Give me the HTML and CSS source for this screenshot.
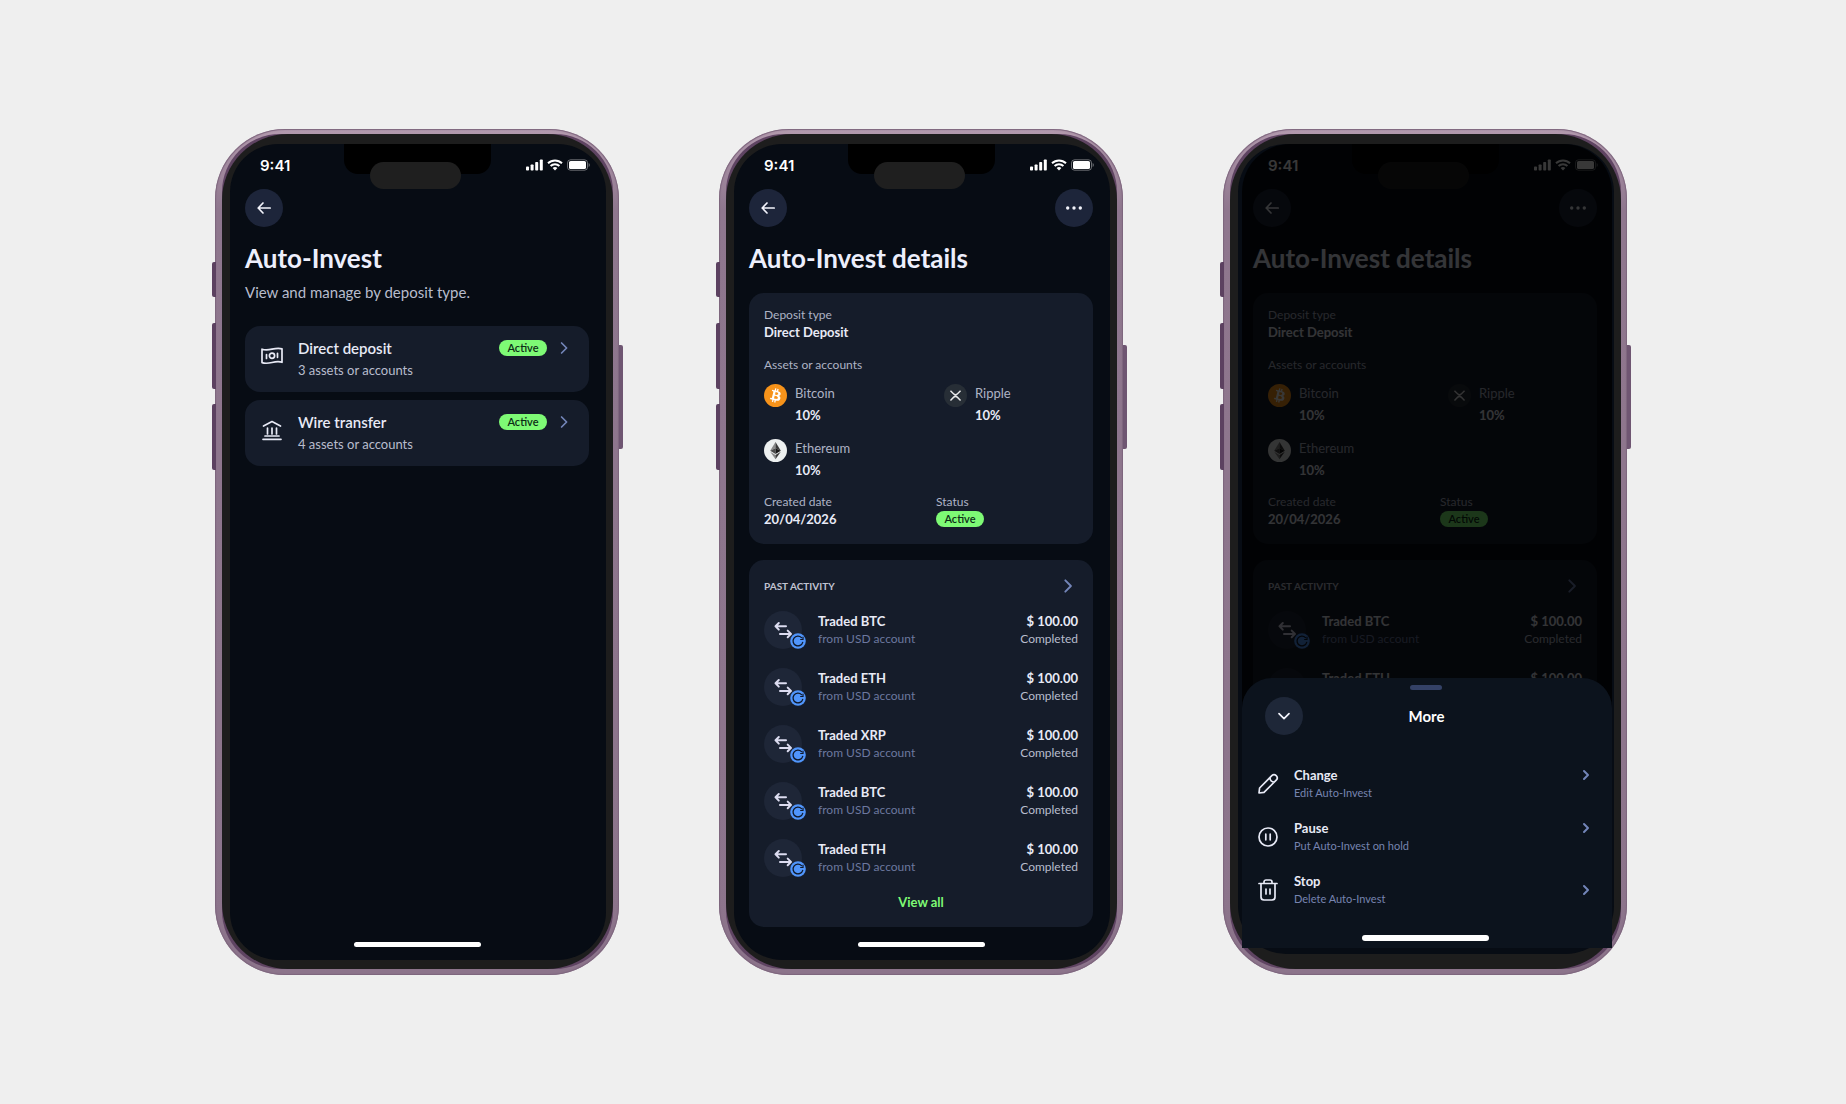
FILE: index.html
```
<!DOCTYPE html>
<html lang="en">
<head>
  <meta charset="UTF-8">
  <meta name="viewport" content="width=device-width, initial-scale=1">
  <title>Auto-Invest</title>
  <link rel="stylesheet" href="styles.css">
</head>
<body>

  <svg class="sprite" aria-hidden="true">
    <symbol id="signal" viewBox="0 0 17 12">
      <rect x="0" y="7.5" width="3" height="4" rx=".8"/>
      <rect x="4.6" y="5.5" width="3" height="6" rx=".8"/>
      <rect x="9.2" y="3" width="3" height="8.5" rx=".8"/>
      <rect x="13.8" y=".5" width="3" height="11" rx=".8"/>
    </symbol>
    <symbol id="wifi" viewBox="0 0 16 12">
      <path fill="none" stroke="currentColor" stroke-width="2" d="M1 4.3a10 10 0 0 1 14 0M3.6 7a6.2 6.2 0 0 1 8.8 0"/>
      <path d="M8 11.5 5.6 9.1a3.4 3.4 0 0 1 4.8 0z"/>
    </symbol>
    <symbol id="battery" viewBox="0 0 23 12">
      <rect x=".5" y=".8" width="20" height="10.4" rx="3" fill="none" stroke="currentColor" opacity=".4"/>
      <rect x="2" y="2" width="17" height="8" rx="1.6"/>
      <path d="M21.6 4v4a2.2 2.2 0 0 0 0-4z" opacity=".4"/>
    </symbol>
    <symbol id="back" viewBox="0 0 16 16">
      <path d="M14.2 8H2.2M7 3 2.2 8 7 13" class="line"/>
    </symbol>
    <symbol id="dots" viewBox="0 0 16 16">
      <circle cx="1.7" cy="8" r="1.7"/><circle cx="8" cy="8" r="1.7"/><circle cx="14.3" cy="8" r="1.7"/>
    </symbol>
    <symbol id="chevron" viewBox="0 0 16 16">
      <path d="M5.6 3 10.6 8l-5 5" class="line"/>
    </symbol>
    <symbol id="chevron-small" viewBox="0 0 16 16">
      <path d="M6 4l4 4-4 4" class="line bold"/>
    </symbol>
    <symbol id="chevron-down" viewBox="0 0 16 16">
      <path d="M3 5.6 8 10.6l5-5" class="line"/>
    </symbol>
    <symbol id="money" viewBox="0 0 22 22">
      <path d="M1 4.2c3.4 1.3 6.6.8 10 0s6.6-1.5 10-.3v13.4c-3.4-1.2-6.6-.6-10 .2s-6.6 1.3-10 .1z" class="line"/>
      <circle cx="11" cy="10.8" r="2.6" class="line"/>
      <path d="M5.5 9.500v4M16.5 8.300v4" class="line"/>
    </symbol>
    <symbol id="bank" viewBox="0 0 22 22">
      <path d="M2.5 7 11 2.500 19.500 7M6.500 9v6M11 9v6M15.500 9v6M4 17h14M2 20.300h18" class="line"/>
    </symbol>
    <symbol id="swap" viewBox="0 0 38 38">
      <path d="M22 15.300H11.500M14.800 12l-3.300 3.300 3.300 3.300M16 22.900h11M23.700 19.600l3.300 3.300-3.300 3.300" class="line bold"/>
    </symbol>
    <symbol id="repeat" viewBox="0 0 16 16">
      <circle cx="8" cy="8" r="7.8" fill="#5095fb"/>
      <path d="M11.500 4.600A4.900 4.900 0 1 0 12.700 9.300" fill="none" stroke="#0f1726" stroke-width="1.300" stroke-linecap="round"/>
      <path d="M10.200 6.500h2.800V3.700" fill="none" stroke="#0f1726" stroke-width="1.200"/>
    </symbol>
    <symbol id="btc" viewBox="0 0 32 32">
      <circle cx="16" cy="16" r="16" fill="#f7931a"/>
      <path fill="#fff" d="M23.189 14.020c.314-2.096-1.283-3.223-3.465-3.975l.708-2.840-1.728-.430-.690 2.765c-.454-.114-.920-.220-1.385-.326l.695-2.783L15.596 6l-.708 2.839c-.376-.086-.746-.170-1.104-.260l.002-.009-2.384-.595-.460 1.846s1.283.294 1.256.312c.700.175.826.638.805 1.006l-.806 3.235c.048.012.110.030.180.057l-.183-.045-1.130 4.532c-.086.212-.303.531-.793.410.018.025-1.256-.313-1.256-.313l-.858 1.978 2.250.561c.418.105.828.215 1.231.318l-.715 2.872 1.727.430.708-2.840c.472.127.930.245 1.378.357l-.706 2.828 1.728.430.715-2.866c2.948.558 5.164.333 6.097-2.333.752-2.146-.037-3.385-1.588-4.192 1.130-.260 1.980-1.003 2.207-2.538zm-3.950 5.538c-.533 2.147-4.148.986-5.320.695l.950-3.805c1.172.293 4.929.872 4.370 3.110zm.535-5.569c-.487 1.953-3.495.960-4.470.717l.860-3.450c.975.243 4.118.696 3.610 2.733z"/>
    </symbol>
    <symbol id="xrp" viewBox="0 0 32 32">
      <circle cx="16" cy="16" r="16" fill="#272e36"/>
      <path d="M9 9.500l4.200 4.200a4 4 0 0 0 5.600 0L23 9.500M9 22.800l4.200-4.200a4 4 0 0 1 5.600 0l4.200 4.200" fill="none" stroke="#e8e8ea" stroke-width="2"/>
    </symbol>
    <symbol id="eth" viewBox="0 0 32 32">
      <circle cx="16" cy="16" r="16" fill="#edf0f0"/>
      <path d="M16 4v8.900L8.600 16.300z" fill="#8a8a8a"/>
      <path d="M16 4v8.900l7.400 3.400z" fill="#3a3a3a"/>
      <path d="M16 12.900v7.800l-7.400-4.400z" fill="#4a4a4a"/>
      <path d="M16 12.900v7.800l7.400-4.400z" fill="#161616"/>
      <path d="M16 22.100V28L8.600 17.700z" fill="#8a8a8a"/>
      <path d="M16 22.100V28l7.400-10.300z" fill="#3a3a3a"/>
    </symbol>
    <symbol id="pencil" viewBox="0 0 22 22">
      <path d="M2 20l.6-5L14.800 2.700a2.900 2.900 0 0 1 4.400 4.400L7 19.400zM13 4.800c0 2.400 1.800 4.200 4.200 4.200" class="line"/>
    </symbol>
    <symbol id="pause" viewBox="0 0 22 22">
      <circle cx="11" cy="11" r="9" class="line"/>
      <path d="M8.800 8.200v5.600M13.200 8.200v5.600" class="line"/>
    </symbol>
    <symbol id="trash" viewBox="0 0 22 22">
      <path d="M2 4.500h18M7 4.500V3a2 2 0 0 1 2-2h4a2 2 0 0 1 2 2v1.500M4 4.500v13.500a3 3 0 0 0 3 3h8a3 3 0 0 0 3-3V4.500M9 10v5M13 10v5" class="line"/>
    </symbol>
  </svg>

  <main class="stage">

    <!-- Overview -->
    <section class="phone">
      <div class="side side-1"></div><div class="side side-2"></div><div class="side side-3"></div><div class="side side-power"></div>
      <div class="screen">
        <div class="notch"></div>
        <div class="island"></div>
        <div class="status-bar">
          <span class="time">9:41</span>
          <svg width="17" height="12"><use href="#signal"/></svg>
          <svg width="16" height="12"><use href="#wifi"/></svg>
          <svg width="23" height="12"><use href="#battery"/></svg>
        </div>
        <div class="nav">
          <button class="round" aria-label="Back"><svg width="16" height="16"><use href="#back"/></svg></button>
        </div>
        <h1>Auto-Invest</h1>
        <p class="intro">View and manage by deposit type.</p>
        <div class="plans">
          <button class="plan">
            <svg width="22" height="22"><use href="#money"/></svg>
            <span class="plan-text">
              <span class="plan-head">Direct deposit <span class="badge">Active</span><svg class="arrow" width="16" height="16"><use href="#chevron"/></svg></span>
              <span class="plan-sub">3 assets or accounts</span>
            </span>
          </button>
          <button class="plan">
            <svg width="22" height="22"><use href="#bank"/></svg>
            <span class="plan-text">
              <span class="plan-head">Wire transfer <span class="badge">Active</span><svg class="arrow" width="16" height="16"><use href="#chevron"/></svg></span>
              <span class="plan-sub">4 assets or accounts</span>
            </span>
          </button>
        </div>
        <div class="home"></div>
      </div>
    </section>

    <!-- Details -->
    <section class="phone">
      <div class="side side-1"></div><div class="side side-2"></div><div class="side side-3"></div><div class="side side-power"></div>
      <div class="screen">
        <div class="notch"></div>
        <div class="island"></div>
        <div class="status-bar">
          <span class="time">9:41</span>
          <svg width="17" height="12"><use href="#signal"/></svg>
          <svg width="16" height="12"><use href="#wifi"/></svg>
          <svg width="23" height="12"><use href="#battery"/></svg>
        </div>
        <div class="nav">
          <button class="round" aria-label="Back"><svg width="16" height="16"><use href="#back"/></svg></button>
          <button class="round" aria-label="More"><svg width="16" height="16"><use href="#dots"/></svg></button>
        </div>
        <h1>Auto-Invest details</h1>
        <div class="card details">
          <div class="label">Deposit type</div>
          <div class="value">Direct Deposit</div>
          <div class="label assets-label">Assets or accounts</div>
          <div class="assets">
            <div class="asset"><svg width="23" height="23"><use href="#btc"/></svg><div><div class="asset-name">Bitcoin</div><div class="asset-share">10%</div></div></div>
            <div class="asset"><svg width="23" height="23"><use href="#xrp"/></svg><div><div class="asset-name">Ripple</div><div class="asset-share">10%</div></div></div>
            <div class="asset"><svg width="23" height="23"><use href="#eth"/></svg><div><div class="asset-name">Ethereum</div><div class="asset-share">10%</div></div></div>
          </div>
          <div class="meta">
            <div><div class="label">Created date</div><div class="value">20/04/2026</div></div>
            <div><div class="label">Status</div><div class="value"><span class="badge">Active</span></div></div>
          </div>
        </div>
        <div class="card activity">
          <div class="activity-head">
            <h2>PAST ACTIVITY</h2>
            <button aria-label="Past activity"><svg class="arrow" width="20" height="18"><use href="#chevron"/></svg></button>
          </div>
          <ul class="trades">
            <li><span class="trade-icon"><svg width="38" height="38"><use href="#swap"/></svg><svg class="repeat" width="16" height="16"><use href="#repeat"/></svg></span><div class="trade-text">Traded BTC<small>from USD account</small></div><div class="trade-sum">$ 100.00<small>Completed</small></div></li>
            <li><span class="trade-icon"><svg width="38" height="38"><use href="#swap"/></svg><svg class="repeat" width="16" height="16"><use href="#repeat"/></svg></span><div class="trade-text">Traded ETH<small>from USD account</small></div><div class="trade-sum">$ 100.00<small>Completed</small></div></li>
            <li><span class="trade-icon"><svg width="38" height="38"><use href="#swap"/></svg><svg class="repeat" width="16" height="16"><use href="#repeat"/></svg></span><div class="trade-text">Traded XRP<small>from USD account</small></div><div class="trade-sum">$ 100.00<small>Completed</small></div></li>
            <li><span class="trade-icon"><svg width="38" height="38"><use href="#swap"/></svg><svg class="repeat" width="16" height="16"><use href="#repeat"/></svg></span><div class="trade-text">Traded BTC<small>from USD account</small></div><div class="trade-sum">$ 100.00<small>Completed</small></div></li>
            <li><span class="trade-icon"><svg width="38" height="38"><use href="#swap"/></svg><svg class="repeat" width="16" height="16"><use href="#repeat"/></svg></span><div class="trade-text">Traded ETH<small>from USD account</small></div><div class="trade-sum">$ 100.00<small>Completed</small></div></li>
          </ul>
          <a class="view-all" href="#">View all</a>
        </div>
        <div class="home"></div>
      </div>
    </section>

    <!-- Details with the "More" sheet open -->
    <section class="phone phone-sheet">
      <div class="side side-1"></div><div class="side side-2"></div><div class="side side-3"></div><div class="side side-power"></div>
      <div class="screen">
        <div class="notch"></div>
        <div class="island"></div>
        <div class="status-bar">
          <span class="time">9:41</span>
          <svg width="17" height="12"><use href="#signal"/></svg>
          <svg width="16" height="12"><use href="#wifi"/></svg>
          <svg width="23" height="12"><use href="#battery"/></svg>
        </div>
        <div class="nav">
          <button class="round" aria-label="Back"><svg width="16" height="16"><use href="#back"/></svg></button>
          <button class="round" aria-label="More"><svg width="16" height="16"><use href="#dots"/></svg></button>
        </div>
        <h1>Auto-Invest details</h1>
        <div class="card details">
          <div class="label">Deposit type</div>
          <div class="value">Direct Deposit</div>
          <div class="label assets-label">Assets or accounts</div>
          <div class="assets">
            <div class="asset"><svg width="23" height="23"><use href="#btc"/></svg><div><div class="asset-name">Bitcoin</div><div class="asset-share">10%</div></div></div>
            <div class="asset"><svg width="23" height="23"><use href="#xrp"/></svg><div><div class="asset-name">Ripple</div><div class="asset-share">10%</div></div></div>
            <div class="asset"><svg width="23" height="23"><use href="#eth"/></svg><div><div class="asset-name">Ethereum</div><div class="asset-share">10%</div></div></div>
          </div>
          <div class="meta">
            <div><div class="label">Created date</div><div class="value">20/04/2026</div></div>
            <div><div class="label">Status</div><div class="value"><span class="badge">Active</span></div></div>
          </div>
        </div>
        <div class="card activity">
          <div class="activity-head">
            <h2>PAST ACTIVITY</h2>
            <button aria-label="Past activity"><svg class="arrow" width="20" height="18"><use href="#chevron"/></svg></button>
          </div>
          <ul class="trades">
            <li><span class="trade-icon"><svg width="38" height="38"><use href="#swap"/></svg><svg class="repeat" width="16" height="16"><use href="#repeat"/></svg></span><div class="trade-text">Traded BTC<small>from USD account</small></div><div class="trade-sum">$ 100.00<small>Completed</small></div></li>
            <li><span class="trade-icon"><svg width="38" height="38"><use href="#swap"/></svg><svg class="repeat" width="16" height="16"><use href="#repeat"/></svg></span><div class="trade-text">Traded ETH<small>from USD account</small></div><div class="trade-sum">$ 100.00<small>Completed</small></div></li>
          </ul>
        </div>
      </div>
      <div class="backdrop">
        <div class="sheet">
          <div class="grip"></div>
          <div class="sheet-head">
            <button class="round" aria-label="Close"><svg width="16" height="16"><use href="#chevron-down"/></svg></button>
            <h2>More</h2>
          </div>
          <div class="actions">
            <button class="action">
              <svg width="22" height="22"><use href="#pencil"/></svg>
              <span class="action-text">Change<small>Edit Auto-Invest</small></span>
              <svg class="arrow" width="16" height="18"><use href="#chevron-small"/></svg>
            </button>
            <button class="action">
              <svg width="22" height="22"><use href="#pause"/></svg>
              <span class="action-text">Pause<small>Put Auto-Invest on hold</small></span>
              <svg class="arrow" width="16" height="18"><use href="#chevron-small"/></svg>
            </button>
            <button class="action action-centered">
              <svg width="22" height="22"><use href="#trash"/></svg>
              <span class="action-text">Stop<small>Delete Auto-Invest</small></span>
              <svg class="arrow" width="16" height="18"><use href="#chevron-small"/></svg>
            </button>
          </div>
          <div class="home"></div>
        </div>
      </div>
    </section>

  </main>
</body>
</html>
```
FILE: styles.css
```
* {
  box-sizing: border-box;
}
body {
  margin: 0;
  min-height: 100vh;
  display: grid;
  align-items: center;
  background: #efefef;
  color: #e8eaf6;
  font-family: Lato, "Liberation Sans", sans-serif;
}
h1, h2, p, ul {
  margin: 0;
  padding: 0;
}
button {
  font: inherit;
  color: inherit;
  border: 0;
  padding: 0;
  background: none;
  cursor: pointer;
}
svg {
  display: block;
  flex: none;
  fill: currentColor;
}
small {
  display: block;
  font-size: 12px;
  font-weight: 400;
}
.sprite {
  position: absolute;
  width: 0;
  height: 0;
}
.line {
  fill: none;
  stroke: currentColor;
  stroke-width: 1.7;
  stroke-linecap: round;
  stroke-linejoin: round;
}
.bold {
  stroke-width: 2;
}

.stage {
  display: flex;
  justify-content: center;
  gap: 100px;
  padding: 40px 4px 40px 0;
}

/* device frame */
.phone {
  position: relative;
  display: flex;
  width: 404px;
  padding: 15px 13px 15px 15px;
  border-radius: 70px;
  background: linear-gradient(#b39aae, #8f778e 80px, #8c748b);
  box-shadow: inset 0 0 1px 1px #7d657d;
}
.phone::before,
.phone::after {
  content: "";
  position: absolute;
  inset: 5px 6px 6px 7px;
  border-radius: 58px;
  background: #5f4462;
}
.phone::after {
  border-radius: 66px;
  background: #1d1d1d;
}
.side {
  position: absolute;
  left: -3px;
  width: 4px;
  height: 66px;
  border-radius: 2px 0 0 2px;
  background: #5c4160;
}
.side-1 {
  top: 133px;
  height: 35px;
}
.side-2 { top: 194px; }
.side-3 { top: 275px; }
.side-power {
  top: 216px;
  left: auto;
  right: -4px;
  height: 104px;
  border-radius: 0 2px 2px 0;
  background: #6f5672;
}

.screen {
  position: relative;
  z-index: 1;
  flex: 1;
  display: flex;
  flex-direction: column;
  padding: 0 17px 13px 15px;
  border-radius: 48px;
  background: #070c14;
  overflow: hidden;
}
.notch {
  position: absolute;
  top: 0;
  left: 114px;
  width: 147px;
  height: 30px;
  border-radius: 0 0 14px 14px;
  background: #000;
}
.island {
  position: absolute;
  top: 18px;
  left: 140px;
  width: 91px;
  height: 27px;
  border-radius: 14px;
  background: #1f1f1f;
}
.status-bar {
  display: flex;
  align-items: center;
  gap: 4px;
  height: 42px;
  margin: 0 -1px 3px 0;
  padding-left: 15px;
  color: #fff;
}
.time {
  margin-right: auto;
  font: 600 15px Inter, sans-serif;
}
.nav {
  display: flex;
  justify-content: space-between;
}
.round {
  display: grid;
  place-items: center;
  width: 38px;
  height: 38px;
  border-radius: 50%;
  background: #1d253a;
  color: #f2f3fb;
}
h1 {
  margin-top: 15px;
  font-size: 26px;
  line-height: 32px;
  font-weight: 700;
  color: #edeffc;
}
.intro {
  margin-top: 8px;
  font-size: 15px;
  line-height: 20px;
  color: #b8bccd;
}
.home {
  width: 127px;
  height: 5px;
  margin: auto auto 0;
  border-radius: 3px;
  background: #fff;
}
.arrow {
  color: #7385b8;
}
.badge {
  display: inline-block;
  width: 48px;
  border-radius: 8px;
  background: #7efa75;
  color: #0c2c17;
  font-size: 11px;
  line-height: 16px;
  font-weight: 600;
  text-align: center;
}

/* overview */
.plans {
  display: flex;
  flex-direction: column;
  gap: 8px;
  margin-top: 24px;
}
.plan {
  display: flex;
  align-items: flex-start;
  gap: 15px;
  padding: 11px 17px 11px 16px;
  border-radius: 15px;
  background: #151c2a;
  text-align: left;
}
.plan > svg {
  margin-top: 8px;
}
.plan-text {
  flex: 1;
}
.plan-head {
  display: flex;
  align-items: center;
  gap: 9px;
  font-size: 15px;
  line-height: 22px;
  font-weight: 600;
}
.plan-head .badge {
  margin-left: auto;
}
.plan-sub {
  display: block;
  font-size: 13px;
  line-height: 22px;
  color: #b8bccd;
}

/* details */
.card {
  padding: 13px 15px 15px;
  border-radius: 15px;
  background: #151c2a;
}
.details {
  margin-top: 19px;
}
.label {
  font-size: 12px;
  line-height: 18px;
  color: #aeb3c5;
}
.value {
  display: flex;
  height: 18px;
  font-size: 13px;
  line-height: 17px;
  font-weight: 700;
}
.value .badge {
  height: 16px;
  line-height: 16px;
}
.assets-label {
  margin-top: 14px;
}
.assets {
  display: grid;
  grid-template-columns: 1fr 1fr;
  gap: 11px 46px;
  margin-top: 10px;
}
.asset {
  display: flex;
  gap: 8px;
  font-size: 13px;
}
.asset-name {
  line-height: 19px;
  color: #aeb3c5;
}
.asset-share {
  line-height: 25px;
  font-weight: 700;
}
.meta {
  display: grid;
  grid-template-columns: 1fr 1fr;
  gap: 30px;
  margin-top: 10px;
}

.activity {
  margin-top: 16px;
  margin-bottom: 15px;
  padding-top: 17px;
}
.activity-head {
  display: flex;
  justify-content: space-between;
  align-items: center;
}
.activity-head h2 {
  font-size: 10px;
  line-height: 18px;
  font-weight: 700;
  color: #c0c3d2;
}
.trades {
  display: flex;
  flex-direction: column;
  gap: 19px;
  margin-top: 16px;
  list-style: none;
}
.trades li {
  display: flex;
  align-items: center;
  height: 38px;
  font-size: 13px;
  line-height: 17px;
  font-weight: 700;
}
.trade-icon {
  position: relative;
  margin-right: 16px;
  border-radius: 50%;
  background: #1e2637;
  color: #dcdcf0;
}
.repeat {
  position: absolute;
  right: -4px;
  bottom: 0;
}
.trade-text small {
  color: #6c789f;
}
.trade-sum {
  margin-left: auto;
  text-align: right;
}
.trade-sum small {
  color: #b8bccd;
}
.view-all {
  display: block;
  margin-top: 15px;
  color: #7efa75;
  font-size: 13px;
  line-height: 20px;
  font-weight: 700;
  text-align: center;
  text-decoration: none;
}

/* more sheet */
.phone-sheet {
  padding-bottom: 21px;
}
.phone-sheet .screen {
  padding-bottom: 0;
}
.backdrop {
  position: absolute;
  z-index: 2;
  inset: 15px 15px 27px 19px;
  display: flex;
  align-items: flex-end;
  border-radius: 48px 48px 0 0;
  background: rgba(0, 0, 0, .78);
}
.sheet {
  flex: 1;
  padding: 7px 18px 7px 15px;
  border-radius: 30px 30px 0 0;
  background: #0c131d;
}
.grip {
  width: 32px;
  height: 5px;
  margin: 0 auto;
  border-radius: 3px;
  background: #344166;
}
.sheet-head {
  display: grid;
  grid-template-columns: 38px 1fr 38px;
  align-items: center;
  margin-top: 7px;
  padding: 0 6px 0 8px;
}
.sheet-head .round {
  background: #1e2738;
}
.sheet-head h2 {
  font-size: 15px;
  font-weight: 700;
  color: #fff;
  text-align: center;
}
.actions {
  display: flex;
  flex-direction: column;
  gap: 17px;
  margin-top: 31px;
}
.action {
  display: flex;
  align-items: center;
  gap: 15px;
  text-align: left;
}
.action-text {
  flex: 1;
  font-size: 13px;
  line-height: 18px;
  font-weight: 700;
}
.action-text small {
  font-size: 11px;
  color: #7784b0;
}
.action .arrow {
  align-self: flex-start;
}
.action-centered .arrow {
  align-self: center;
}
.sheet .home {
  margin-top: 27px;
  height: 6px;
}
```
